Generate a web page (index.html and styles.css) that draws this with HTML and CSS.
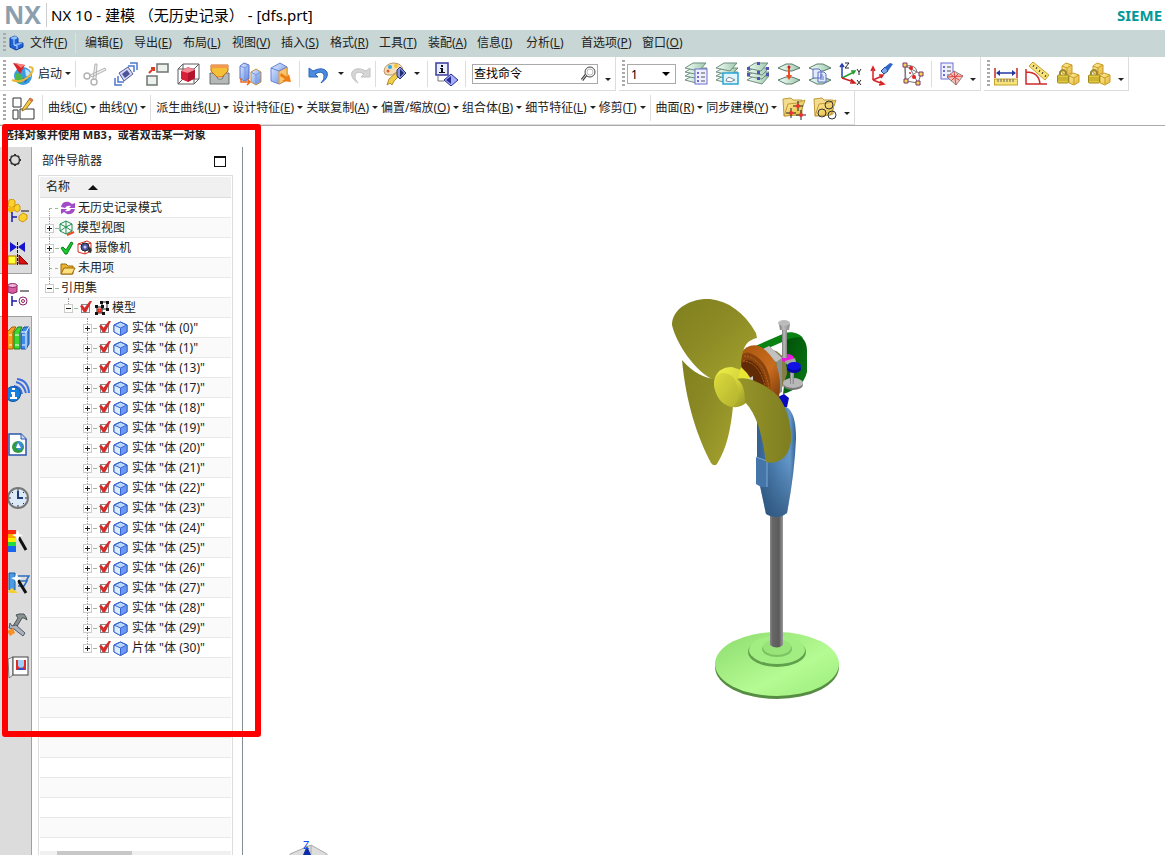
FILE: index.html
```html
<!DOCTYPE html>
<html lang="zh-CN">
  <head>
    <meta charset="UTF-8" />
    <meta name="viewport" content="width=device-width, initial-scale=1.0" />
    <title>NX 10 - 建模</title>
    <link rel="stylesheet" href="styles.css">
  </head>
  <body>
    <!-- shared icons and gradients -->
    <svg class="defs" width="0" height="0" aria-hidden="true">
      <defs>
        <linearGradient id="gold" x1="0" y1="0" x2="1" y2="1"><stop offset="0" stop-color="#fff0a0"/><stop offset="1" stop-color="#e3b53a"/></linearGradient>
        <linearGradient id="blue" x1="0" y1="0" x2="1" y2="1"><stop offset="0" stop-color="#e4f0ff"/><stop offset="1" stop-color="#5b86e8"/></linearGradient>
        <linearGradient id="sheet" x1="0" y1="0" x2="1" y2="0"><stop offset="0" stop-color="#f4fff8"/><stop offset="1" stop-color="#9cc8ac"/></linearGradient>
        <symbol id="cube" viewBox="0 0 15 15">
          <path d="M7.500 1L14 4V11L7.500 14.500L1 11V4Z" fill="#b9d6ff" stroke="#2457c5"/>
          <path d="M1 4L7.500 7L7.500 14.500L1 11Z" fill="#dcecff"/>
          <path d="M7.500 7L14 4V11L7.500 14.500Z" fill="#6c97f4"/>
          <path d="M1 4L7.500 7L14 4M7.500 7V14M7.500 1L14 4V11L7.500 14.500L1 11V4Z" fill="none" stroke="#3a68cf"/>
        </symbol>
        <symbol id="layers" viewBox="0 0 24 24">
          <g fill="url(#sheet)" stroke="#6f8f81">
            <path d="M1 18L8 14H23L16 22Z"/><path d="M1 14L8 10H23L16 17Z"/><path d="M1 10L8 6H23L16 13Z"/><path d="M1 6L9 1H22L15 9Z"/>
          </g>
        </symbol>
        <symbol id="two-sheets" viewBox="0 0 24 24">
          <g fill="url(#sheet)" stroke="#5b7b6d"><path d="M1 6L9 2H15L23 6L15 9H9Z"/><path d="M1 18L9 15H15L23 18L15 22H9Z"/></g>
        </symbol>
        <symbol id="lock-boxes" viewBox="0 0 24 24">
          <g fill="url(#gold)" stroke="#c99c26"><path d="M6 4L10 1L16 3V11L11 13L6 11Z"/><path d="M13 14L17 11L23 13V20L18 23L13 21Z"/><path d="M6 4L11 6L16 3M11 6V12M13 14L18 16L23 13M18 16V22" fill="none"/></g>
          <path d="M4 13V10Q7 6 10 10V13" fill="none" stroke="#9a8a35" stroke-width="2"/>
          <rect x="1.500" y="13" width="11" height="8" rx="1" fill="#e2c83c" stroke="#a08a20"/><path d="M2 16H12M2 18H12" stroke="#b59f28"/>
        </symbol>
        <symbol id="folder" viewBox="0 0 24 24"><path d="M1 3L9 2L11 4H20V18L2 20Z" fill="#f3dc8c" stroke="#c09a3c"/><path d="M2 20L6 8L15 7L23 4L18 19Z" fill="url(#gold)" stroke="#c09a3c"/></symbol>
      </defs>
    </svg>

    <header class="titlebar">
      <span class="logo">NX</span>
      <h1 class="title">NX 10 - 建模 （无历史记录） - [dfs.prt]</h1>
      <span class="brand">SIEME</span>
    </header>

    <nav class="menubar">
      <i class="grip"></i>
      <svg class="app-icon" viewBox="0 0 16 16"><path d="M2 3L7 1L10 3V8L15 8V12L8 15L2 12Z" fill="#1f62d8" stroke="#123f9e"/><path d="M2 3L7 1L10 3L6 5Z" fill="#8cc0ff"/><path d="M6 10L10 8L15 8L9 11Z" fill="#79b1ff"/><path d="M6 5V10L9 11V14" fill="none" stroke="#bcdcff"/></svg>
      <button class="menu first">文件(<u>F</u>)</button>
      <button class="menu">编辑(<u>E</u>)</button>
      <button class="menu">导出(<u>E</u>)</button>
      <button class="menu">布局(<u>L</u>)</button>
      <button class="menu">视图(<u>V</u>)</button>
      <button class="menu">插入(<u>S</u>)</button>
      <button class="menu">格式(<u>R</u>)</button>
      <button class="menu">工具(<u>T</u>)</button>
      <button class="menu">装配(<u>A</u>)</button>
      <button class="menu">信息(<u>I</u>)</button>
      <button class="menu">分析(<u>L</u>)</button>
      <button class="menu wide">首选项(<u>P</u>)</button>
      <button class="menu">窗口(<u>O</u>)</button>
    </nav>

    <div class="toolbar-row">
      <div class="toolbar">
        <i class="grip"></i>
        <button class="start">
          <svg class="icon" viewBox="0 0 24 24"><circle cx="12" cy="14" r="9" fill="#3b9be0"/><path d="M4 12Q9 10 11 14T9 22Q3 20 4 12Z" fill="#4db848"/><path d="M14 7Q20 9 20 15L15 14Z" fill="#bfe6ff"/><path d="M12 16L17 17L14 21Z" fill="#1c6cc0"/><path d="M2 1L14 3L9 12Z" fill="#d8232a"/><path d="M4 1L14 3L10 6Z" fill="#f58078"/><path d="M1 18Q11 22 19 13Q25 5 18 5" fill="none" stroke="#e9b63a" stroke-width="2"/></svg>
          启动<i class="arrow"></i>
        </button>
        <i class="sep"></i>
        <button class="tool" aria-label="剪切"><svg class="icon" viewBox="0 0 24 24"><g fill="none" stroke="#b4b4b4"><circle cx="4" cy="14" r="3" stroke-width="1.500"/><circle cx="11" cy="20" r="3" stroke-width="1.500"/><path d="M7 13L22 6L23 8L9 15ZM10 17L12 2L14 2L13 17Z" fill="#eee"/></g></svg></button>
        <button class="tool" aria-label="移动"><svg class="icon" viewBox="0 0 24 24"><path d="M5 11L14 5L19 12L10 19Z" fill="#d4d8f2" stroke="#535a9c"/><path d="M8 12L13 8L16 12L11 16Z" fill="#4b5598"/><path d="M16 1H23V8M14 4H20V10M1 16V23H8M4 14V20H10" fill="none" stroke="#4f78d0" stroke-width="1.500"/></svg></button>
        <button class="tool" aria-label="复制显示"><svg class="icon" viewBox="0 0 24 24"><path d="M12 2H23V10H12ZM2 14H12V23H2Z" fill="#edf1ee" stroke="#6d7572" stroke-width="1.500"/><path d="M4 11L9 6M6 6H9V9" fill="none" stroke="#dd3c20" stroke-width="2"/></svg></button>
        <button class="tool" aria-label="着色"><svg class="icon" viewBox="0 0 24 24"><path d="M2 7L7 2H23V17L18 22H2ZM2 7H18V22M18 7L23 2M7 2V17H23M2 22L7 17" fill="none" stroke="#5d5d5d"/><path d="M5 9L12 5L19 8V16L12 20L5 17Z" fill="#d8203a"/><path d="M5 9L12 5L19 8L12 11Z" fill="#f58a94"/><path d="M12 11L19 8V16L12 20Z" fill="#b3142c"/></svg></button>
        <button class="tool" aria-label="拔模"><svg class="icon" viewBox="0 0 24 24"><path d="M3 11H8L11 17H15L18 11H22V22H3Z" fill="#b5b9b7" stroke="#6b6f6d"/><path d="M4 3H21V9L15 15H10L4 9Z" fill="#f4c136" stroke="#c46a20"/><path d="M4 3H21V6H4Z" fill="#f49a4a"/></svg></button>
        <button class="tool" aria-label="拉伸"><svg class="icon" viewBox="0 0 24 24"><path d="M2 4L6 1L11 3V17L7 19L2 17Z" fill="url(#blue)" stroke="#5d73c4"/><path d="M13 10L18 7L23 10V20L18 23L13 20Z" fill="url(#blue)" stroke="#c7923d"/><path d="M18 13V22M13 10L18 13L23 10M2 4L7 6L11 3M7 6V18" stroke="#7c92dc" fill="none"/><path d="M3 16V20H12M9 17L12 20L9 23" fill="none" stroke="#ee6a19" stroke-width="1.500"/></svg></button>
        <button class="tool" aria-label="偏置"><svg class="icon" viewBox="0 0 24 24"><path d="M2 6L11 1L18 5V18L10 22L2 19Z" fill="url(#blue)" stroke="#6b83d4"/><path d="M10 9L18 5V18L10 22Z" fill="#fbc46c" stroke="#d99a37"/><path d="M2 6L10 9L18 5" fill="none" stroke="#6b83d4"/><path d="M12 11L18 15L20 12L22 20L13 19L16 17L11 14Z" fill="#f07c14"/></svg></button>
        <i class="sep"></i>
        <button class="tool" aria-label="撤销"><svg class="icon" viewBox="0 0 24 24"><path d="M2 6V15H11L8 12Q15 8 17 13Q18 17 14 21Q22 16 20 10Q16 4 6 9Z" fill="#4a8be0" stroke="#2e66bd"/></svg></button>
        <button class="drop" aria-label="撤销列表"><i class="arrow"></i></button>
        <button class="tool redo" aria-label="重做"><svg class="icon" viewBox="0 0 24 24"><path d="M22 6V15H13L16 12Q9 8 7 13Q6 17 10 21Q2 16 4 10Q8 4 18 9Z" fill="#d6d6d6" stroke="#c2c2c2"/></svg></button>
        <i class="sep"></i>
        <button class="tool" aria-label="编辑对象显示"><svg class="icon" viewBox="0 0 24 24"><path d="M1 9Q2 2 10 1Q19 1 20 8Q17 13 12 11Q10 14 5 13Q1 13 1 9Z" fill="#f4dfb4" stroke="#b8966a"/><circle cx="7" cy="5" r="2" fill="#2fa8e8"/><circle cx="13" cy="4" r="2" fill="#f2c22e"/><circle cx="5" cy="9" r="1.500" fill="#e8573a"/><path d="M4 23L6 17L14 10L17 13L11 19L9 23L7 21Z" fill="#f1cf4b" stroke="#b78e26"/><path d="M14 8L17 5L23 11L17 17L14 14Z" fill="#8d99e8" stroke="#2a357f"/><path d="M17 7L21 11L17 15Z" fill="#242c70"/></svg></button>
        <button class="drop" aria-label="显示选项"><i class="arrow"></i></button>
        <i class="sep"></i>
        <button class="tool" aria-label="对象信息"><svg class="icon" viewBox="0 0 24 24"><rect x="1" y="1" width="12" height="12" fill="#e8ecff" stroke="#3a3a9e" stroke-width="1.500"/><path d="M6 3H8V5H6ZM5 6H8V10H10V11H4V10H6V7H5Z" fill="#111"/><path d="M3 14V19H9" fill="none" stroke="#777"/><path d="M9 18L16 12L23 18L16 24Z" fill="#a4b0ff" stroke="#2b2b80"/><path d="M11 18L16 14V22Z" fill="#2b2b90"/></svg></button>
        <i class="sep"></i>
        <div class="search">
          <input type="text" value="查找命令" aria-label="查找命令">
          <svg viewBox="0 0 16 16"><circle cx="10" cy="6" r="5" fill="#fff" stroke="#444"/><circle cx="10" cy="6" r="3" fill="none" stroke="#bbb"/><path d="M6 9L2 14" stroke="#444" stroke-width="3"/><path d="M6 9L2 14" stroke="#ddd"/></svg>
        </div>
        <button class="drop low" aria-label="工具条选项"><i class="arrow"></i></button>
      </div>

      <div class="toolbar">
        <i class="grip"></i>
        <select class="layer" aria-label="工作图层"><option>1</option></select>
        <button class="tool" aria-label="图层设置"><svg class="icon" viewBox="0 0 24 24"><use href="#layers"/><rect x="11" y="7" width="12" height="15" fill="#eef0ff" stroke="#6d6cd4"/><path d="M13 10H15V12H13ZM13 14H15V16H13ZM13 18H15V20H13Z" fill="#6d6cd4"/><path d="M17 11H21M17 15H21M17 19H21" stroke="#555"/></svg></button>
        <button class="tool" aria-label="视图可见图层"><svg class="icon" viewBox="0 0 24 24"><use href="#layers"/><rect x="8" y="11" width="15" height="11" fill="#dff6ff" stroke="#2aa5d6" stroke-width="1.500"/><path d="M11 19Q12 14 16 16T20 18Q16 21 11 19Z" fill="#fff" stroke="#789"/></svg></button>
        <button class="tool" aria-label="图层类别"><svg class="icon" viewBox="0 0 24 24"><use href="#layers"/><path d="M11 0H14V3H11ZM1 5H4V8H1ZM11 9H14V12H11ZM20 5H23V8H20ZM1 11H4V14H1ZM20 11H23V14H20ZM11 15H14V18H11Z" fill="#5252b8"/></svg></button>
        <button class="tool" aria-label="移动至图层"><svg class="icon" viewBox="0 0 24 24"><use href="#two-sheets"/><path d="M12 5V15" stroke="#f04a20" stroke-width="2"/><path d="M9 13H15L12 18Z" fill="#f04a20"/><circle cx="12" cy="5" r="1.500" fill="#d51818"/></svg></button>
        <button class="tool" aria-label="复制至图层"><svg class="icon" viewBox="0 0 24 24"><use href="#two-sheets"/><path d="M5 7H11L13 9V16H5ZM10 10H16L18 12V20H10Z" fill="#e4ebff" stroke="#5b72c4"/><path d="M12 13H15M12 15H16M12 17H16" stroke="#5b72c4"/></svg></button>
        <button class="tool" aria-label="WCS"><svg class="icon" viewBox="0 0 24 24"><path d="M3 16V3M1 5L3 2L5 5" stroke="#2840b0" stroke-width="1.500" fill="none"/><path d="M3 16L15 10M12 9H16L14 12" stroke="#22a02c" stroke-width="1.500" fill="none"/><path d="M3 16L15 20M12 17L16 21L11 21" stroke="#c82020" stroke-width="1.500" fill="none"/><path d="M6 1H10L6 6H10M18 7L20 10L22 7M20 10V13M18 18L22 23M22 18L18 23" fill="none" stroke="#222"/></svg></button>
        <button class="tool" aria-label="显示 WCS"><svg class="icon" viewBox="0 0 24 24"><path d="M3 18V6M1 9L3 5L5 9M3 18L12 14M9 13H13L11 16M3 18L13 22M10 19L14 22L9 23" fill="none" stroke="#d82424" stroke-width="1.500"/><path d="M11 9L15 5L18 9L14 12Z" fill="#82a6ee" stroke="#244a9c"/><path d="M15 5L20 1L23 2L18 9Z" fill="#2d65c8"/></svg></button>
        <button class="tool" aria-label="点集"><svg class="icon" viewBox="0 0 24 24"><path d="M4 4L20 12L17 21L5 19ZM4 4Q15 2 16 10Q12 12 5 19M4 4V19M10 8L17 21" fill="none" stroke="#777"/><path d="M2 1H6V5H2ZM18 10H22V14H18ZM3 17H7V21H3ZM15 19H19V23H15Z" fill="#f7d94c" stroke="#7a3070"/><circle cx="10" cy="6" r="2" fill="#e32222"/><circle cx="13" cy="15" r="2" fill="#e32222"/><circle cx="9" cy="11" r="1" fill="#e32222"/></svg></button>
        <i class="sep"></i>
        <button class="tool" aria-label="显示列表"><svg class="icon" viewBox="0 0 24 24"><rect x="2" y="1" width="12" height="16" fill="#eef0ff" stroke="#6d6cd4"/><path d="M4 4H6V6H4ZM4 8H6V10H4ZM4 12H6V14H4Z" fill="#6d6cd4"/><path d="M8 5H12M8 9H12M8 13H11" stroke="#555"/><path d="M8 15L15 9L24 14L17 23Z" fill="#f7c0b8" stroke="#888"/><path d="M8 15L24 14M15 9L17 23M11 12L20 18M12 19L19 12" stroke="#d84a4a"/></svg></button>
        <button class="drop low" aria-label="工具条选项"><i class="arrow"></i></button>
      </div>

      <div class="toolbar">
        <i class="grip"></i>
        <button class="tool" aria-label="测量距离"><svg class="icon" viewBox="0 0 24 24"><path d="M1 6V16M23 6V16" stroke="#c62828" stroke-width="1.500"/><path d="M3 11H21" stroke="#2438a0" stroke-width="1.500"/><path d="M2 11L6 8V14ZM22 11L18 8V14Z" fill="#2438a0"/><rect x="0.500" y="17" width="23" height="6" fill="#f8e27a" stroke="#c6a22e"/><path d="M4 17V20M7 17V20M10 17V20M13 17V20M16 17V20M19 17V20" stroke="#666"/></svg></button>
        <button class="tool" aria-label="测量角度"><svg class="icon" viewBox="0 0 24 24"><path d="M1 7V22H22M1 10Q14 10 15 22" fill="none" stroke="#d02a2a" stroke-width="1.500"/><path d="M4 4L8 0L24 13L20 18Z" fill="#f8e27a" stroke="#c6a22e"/><path d="M9 3L8 5M12 5L11 7M15 8L14 10M18 10L17 12M21 13L20 15" stroke="#333"/></svg></button>
        <button class="tool" aria-label="装配约束"><svg class="icon" viewBox="0 0 24 24"><use href="#lock-boxes"/></svg></button>
        <button class="tool" aria-label="移动组件"><svg class="icon" viewBox="0 0 24 24"><use href="#lock-boxes"/></svg></button>
        <button class="drop low" aria-label="工具条选项"><i class="arrow"></i></button>
      </div>
    </div>

    <div class="toolbar-row second">
      <div class="toolbar">
        <i class="grip"></i>
        <button class="tool sketch" aria-label="草图"><svg class="icon" viewBox="0 0 24 24"><path d="M2 2H10V11H2ZM2 14H7V23H2ZM9 13H23V23H9Z" fill="#fff" stroke="#333"/><path d="M12 12L19 2L22 4L15 13L11 15Z" fill="#f5c944" stroke="#9b7425"/><path d="M19 2L22 4L21 6L18 4Z" fill="#e86a5a"/></svg></button>
        <i class="sep"></i>
        <button class="text-tool">曲线(<u>C</u>)<i class="arrow"></i></button>
        <button class="text-tool">曲线(<u>V</u>)<i class="arrow"></i></button>
        <i class="sep"></i>
        <button class="text-tool">派生曲线(<u>U</u>)<i class="arrow"></i></button>
        <button class="text-tool">设计特征(<u>E</u>)<i class="arrow"></i></button>
        <button class="text-tool">关联复制(<u>A</u>)<i class="arrow"></i></button>
        <button class="text-tool">偏置/缩放(<u>O</u>)<i class="arrow"></i></button>
        <button class="text-tool">组合体(<u>B</u>)<i class="arrow"></i></button>
        <button class="text-tool">细节特征(<u>L</u>)<i class="arrow"></i></button>
        <button class="text-tool">修剪(<u>T</u>)<i class="arrow"></i></button>
        <i class="sep"></i>
        <button class="text-tool">曲面(<u>R</u>)<i class="arrow"></i></button>
        <button class="text-tool">同步建模(<u>Y</u>)<i class="arrow"></i></button>
        <button class="tool" aria-label="点组"><svg class="icon" viewBox="0 0 24 24"><use href="#folder"/><path d="M16 5V15M11 10H21M9 12V22M4 17H14M19 14V24M14 19H24" stroke="#222"/><circle cx="16" cy="10" r="2" fill="#f03030"/><circle cx="9" cy="17" r="2" fill="#f03030"/><circle cx="19" cy="19" r="2" fill="#f03030"/></svg></button>
        <button class="tool" aria-label="曲线组"><svg class="icon" viewBox="0 0 24 24"><use href="#folder"/><g fill="none" stroke="#333"><circle cx="16" cy="9" r="4"/><circle cx="9" cy="17" r="4"/><circle cx="19" cy="19" r="4"/></g></svg></button>
        <button class="drop low" aria-label="工具条选项"><i class="arrow"></i></button>
      </div>
    </div>

    <p class="prompt">选择对象并使用 MB3，或者双击某一对象</p>

    <main class="workspace">
      <aside class="resource-bar">
        <button class="gear" aria-label="设置"><svg viewBox="0 0 24 24"><circle cx="9" cy="12" r="4.500" fill="none" stroke="#333" stroke-width="1.500"/><path d="M9 6V8M9 16V18M3 12H5M13 12H15M5 8L6 9M12 15L13 16M13 8L12 9M5 16L6 15" stroke="#333" stroke-width="2"/></svg></button>
        <button class="tab" aria-label="装配导航器"><svg viewBox="0 0 24 24"><path d="M3 1L7 0L9 2V7L5 9L2 7ZM8 7L12 5L14 7V11L11 13L8 11ZM13 17L17 14L21 16V20L17 23L13 21Z" fill="#fbd12c" stroke="#d19510"/><path d="M2 9L5 7L8 9V12L5 14L2 12Z" fill="#f3b90c"/><path d="M15 12H23" stroke="#111"/><path d="M6 13V23M6 18H11" stroke="#1a1aa8" stroke-width="1.500"/></svg></button>
        <button class="tab last" aria-label="约束导航器"><svg viewBox="0 0 24 24"><path d="M4 1L11 6L4 11ZM19 1L12 6L19 11Z" fill="#1515d0"/><path d="M11.500 1V24" stroke="#111" stroke-dasharray="3 1"/><rect x="2" y="15" width="8" height="8" fill="#ff3" stroke="#b07000"/><path d="M13 14V23H22Z" fill="#e01010" stroke="#700"/></svg></button>
        <button class="tab active" aria-label="部件导航器"><svg viewBox="0 0 24 24"><path d="M2 2V9Q6 12 11 9V2" fill="#d65ca0" stroke="#8c2066"/><ellipse cx="6.500" cy="2.500" rx="4.500" ry="2" fill="#f5b4d8" stroke="#8c2066"/><path d="M14 8H23" stroke="#111"/><path d="M6 13V23M6 18H11" stroke="#1a1aa8" stroke-width="1.500"/><circle cx="17" cy="18" r="4" fill="#fff" stroke="#8c2066"/><circle cx="17" cy="18" r="1.500" fill="none" stroke="#8c2066"/></svg></button>
        <button class="tab next" aria-label="重用库"><svg viewBox="0 0 24 24"><path d="M1 6L6 1H10L7 6V23H1Z" fill="#f6a020" stroke="#a85808"/><path d="M8 6L12 1H16L14 6V23H8Z" fill="#3fd830" stroke="#16801a"/><path d="M15 6L18 1H23V18L20 23H15Z" fill="#3f8be8" stroke="#1a4fa5"/><path d="M15 6H20V23M20 6L23 1M3 9H6M3 19H6M9 9H13M9 19H13M16 9H19M16 19H19" stroke="#fff" fill="none"/></svg></button>
        <button class="tab tall" aria-label="HD3D 工具"><svg viewBox="0 0 24 24"><path d="M8 8Q15 9 16 16M10 4Q18 6 20 15M11 1Q22 2 23 15" fill="none" stroke="#3d6edb" stroke-width="2"/><circle cx="7" cy="16" r="7.500" fill="#1680dc" stroke="#0b4f9e"/><path d="M6 10H9V12H6ZM5 14H9V19H11V21H4V19H6V16H5Z" fill="#fff"/></svg></button>
        <button class="tab tall" aria-label="Web 浏览器"><svg viewBox="0 0 24 24"><path d="M3 2H15L20 7V23H3Z" fill="#fff" stroke="#2c55ad" stroke-width="1.500"/><path d="M15 2V7H20" fill="#c8daff" stroke="#2c55ad"/><circle cx="12" cy="15" r="6" fill="#2f9a3f"/><path d="M12 9Q17 10 17 15L14 19L9 15Z" fill="#3b8ddd"/><path d="M12 11L15 16H10Z" fill="#fff"/></svg></button>
        <button class="tab tall" aria-label="历史记录"><svg viewBox="0 0 24 24"><circle cx="12" cy="12" r="10" fill="#dce9f7" stroke="#777" stroke-width="2"/><path d="M12 5V12H17" fill="none" stroke="#1c3f7c" stroke-width="2"/><path d="M12 3V5M12 19V21M3 12H5M19 12H21M6 6L7 7M17 17L18 18M18 6L17 7M6 18L7 17" stroke="#333"/></svg></button>
        <button class="tab" aria-label="系统材料"><svg viewBox="0 0 24 24"><path d="M1 1H10V5H1Z" fill="#ff2a10"/><path d="M1 5H10V9H1Z" fill="#ffa500"/><path d="M1 9H10V13H1Z" fill="#f5f000"/><path d="M1 13H10V17H1Z" fill="#25dc40"/><path d="M1 17H10V23H1Z" fill="#1767ee"/><path d="M12 7L20 21" stroke="#111" stroke-width="3"/><path d="M12 1L13 5L17 6L13 8L12 12L10 8L6 6L10 5Z" fill="#fff"/></svg></button>
        <button class="tab" aria-label="加工向导"><svg viewBox="0 0 24 24"><path d="M3 2H9V19H3Z" fill="#4a9be2" stroke="#1f5ca5"/><path d="M10 5H23L20 10H12M10 10H21L18 15H12" fill="none" stroke="#2c6cc0" stroke-width="1.500"/><path d="M2 20L6 17L12 22H3Z" fill="#f5cf33"/><path d="M12 9L20 22" stroke="#111" stroke-width="3"/><path d="M11 2L12 6L16 7L12 9L11 13L9 9L5 7L9 6Z" fill="#fff"/></svg></button>
        <button class="tab" aria-label="工具"><svg viewBox="0 0 24 24"><path d="M10 2L13 1H18L20 4L21 7L18 5H16L10 15L7 13L12 5Z" fill="#899193" stroke="#4b5153"/><path d="M4 10L6 13L10 12L19 20L17 23L8 16L3 15Z" fill="#abb4be" stroke="#515a66"/><path d="M1 18L7 15L9 20L4 23Z" fill="#f5902c"/></svg></button>
        <button class="tab" aria-label="角色"><svg viewBox="0 0 24 24"><path d="M2 4L7 2V20L3 23Z" fill="#eee" stroke="#777"/><rect x="7" y="2" width="15" height="18" fill="#fff" stroke="#444"/><rect x="10" y="5" width="10" height="10" fill="#e02a25"/><path d="M12 5H18V11L15 14L12 11Z" fill="#9cd0ff"/><path d="M11 15Q15 10 19 15Z" fill="#2850cc"/></svg></button>
      </aside>

      <section class="navigator">
        <div class="nav-head">
          <h2>部件导航器</h2>
          <button class="maximize" aria-label="最大化"></button>
        </div>
        <div class="tree">
          <div class="column-head">名称<i class="sort"></i></div>
          <ul class="rows" id="rows">
            <li class="row trunk start-trunk"><i class="stub"></i>
              <svg class="node" viewBox="0 0 16 16"><path d="M1 7Q2 1 9 2L12 4L15 3V8H9L11 6Q7 5 5 8Z" fill="#a24cc8"/><path d="M15 9Q14 15 7 14L4 12L1 14V9H7L5 11Q10 12 11 9Z" fill="#a24cc8"/></svg>无历史记录模式</li>
            <li class="row trunk"><i class="expander plus"></i>
              <svg class="node" viewBox="0 0 16 16"><path d="M1 4L7 1L13 4V11L7 14L1 11ZM1 4L7 7L13 4M7 1V14M1 11L7 7L13 11" fill="none" stroke="#1a9050"/><path d="M8 15L15 12" stroke="#e84c20" stroke-width="2"/></svg>模型视图</li>
            <li class="row trunk"><i class="expander plus"></i>
              <svg class="node" viewBox="0 0 16 16"><path d="M2 8L4 7L7 10L12 2L14 3L8 14H6Z" fill="#18c82c" stroke="#078518"/></svg>
              <svg class="node camera" viewBox="0 0 16 16"><path d="M1 4L10 1L14 3V11L8 14L1 12Z" fill="#fff" stroke="#d83020"/><path d="M1 4L8 5L14 3M8 5V14" stroke="#d83020" fill="none"/><circle cx="8" cy="7" r="4" fill="#4a55a8" stroke="#222"/><circle cx="8" cy="7" r="1.500" fill="#cce"/><path d="M12 7Q16 8 14 13L11 12Z" fill="#333"/></svg>摄像机</li>
            <li class="row trunk"><i class="stub"></i>
              <svg class="node" viewBox="0 0 16 16"><path d="M1 4H6L8 6H13V14H1Z" fill="#e9b431" stroke="#9d6c0b"/><path d="M1 14L4 8H15L12 14Z" fill="#ffe080" stroke="#9d6c0b"/></svg>未用项</li>
            <li class="row trunk end-trunk"><i class="expander"></i>引用集</li>
            <li class="row level-2 end-trunk"><i class="expander"></i><input type="checkbox" checked aria-label="模型">
              <svg class="node" viewBox="0 0 16 16"><path d="M3 7H8V13H3ZM8 2H13V9H8Z" fill="#fff" stroke="#222"/><path d="M1 5H4V8H1ZM7 5H10V8H7ZM1 12H4V15H1ZM8 12H11V15H8ZM6 1H9V4H6ZM12 1H15V4H12ZM12 8H15V11H12Z" fill="#111"/><rect x="4" y="9" width="3" height="3" fill="#f57030" stroke="#d00"/></svg>模型</li>
          </ul>
          <div class="hscroll"><i></i></div>
        </div>
      </section>

      <section class="canvas">
        <svg viewBox="243 147 922 708" preserveAspectRatio="xMinYMin meet" role="img" aria-label="电风扇模型">
          <defs>
            <linearGradient id="blade" x1="0" y1="0" x2="1" y2="1"><stop offset="0" stop-color="#80801f"/><stop offset="0.400" stop-color="#8a8924"/><stop offset="1" stop-color="#a5a32e"/></linearGradient>
            <linearGradient id="blade-dark" x1="0" y1="0" x2="1" y2="0"><stop offset="0" stop-color="#96942a"/><stop offset="1" stop-color="#7f7e20"/></linearGradient>
            <linearGradient id="hub" x1="0" y1="0" x2="1" y2="1"><stop offset="0" stop-color="#f2f24a"/><stop offset="0.500" stop-color="#d6d53c"/><stop offset="1" stop-color="#8f8e22"/></linearGradient>
            <linearGradient id="hub-face" x1="0" y1="0" x2="1" y2="1"><stop offset="0" stop-color="#dcdb3e"/><stop offset="1" stop-color="#b3b22e"/></linearGradient>
            <linearGradient id="neck" x1="0" y1="0" x2="1" y2="0"><stop offset="0" stop-color="#335f8d"/><stop offset="0.500" stop-color="#4f82b5"/><stop offset="0.850" stop-color="#6396c9"/><stop offset="1" stop-color="#335f8d"/></linearGradient>
            <linearGradient id="neck-shade" x1="0" y1="0" x2="0" y2="1"><stop offset="0.500" stop-color="#234568" stop-opacity="0"/><stop offset="1" stop-color="#234568" stop-opacity="0.600"/></linearGradient>
            <linearGradient id="pole" x1="0" y1="0" x2="1" y2="0"><stop offset="0" stop-color="#8a8a8a"/><stop offset="0.200" stop-color="#666"/><stop offset="0.700" stop-color="#5c5c5c"/><stop offset="0.900" stop-color="#868686"/><stop offset="1" stop-color="#999"/></linearGradient>
            <linearGradient id="base" x1="0" y1="0" x2="1" y2="1"><stop offset="0" stop-color="#8ddb6d"/><stop offset="0.600" stop-color="#b4fb93"/><stop offset="1" stop-color="#9cec7b"/></linearGradient>
            <linearGradient id="metal" x1="0" y1="0" x2="1" y2="0"><stop offset="0" stop-color="#777"/><stop offset="0.400" stop-color="#bbb"/><stop offset="1" stop-color="#888"/></linearGradient>
            <linearGradient id="motor" x1="0" y1="0" x2="1" y2="1"><stop offset="0" stop-color="#a9560f"/><stop offset="0.600" stop-color="#c96c1e"/><stop offset="1" stop-color="#7c3d0b"/></linearGradient>
            <linearGradient id="shell" x1="0" y1="0" x2="1" y2="1"><stop offset="0" stop-color="#004c06"/><stop offset="1" stop-color="#0a7a16"/></linearGradient>
          </defs>

          <!-- base and pole -->
          <ellipse cx="777" cy="667" rx="62" ry="32" fill="#558e42"/>
          <ellipse cx="777" cy="664" rx="62" ry="32" fill="url(#base)"/>
          <ellipse cx="777" cy="652" rx="29" ry="15" fill="#60a04a"/>
          <ellipse cx="777" cy="650" rx="28" ry="14" fill="#a3ee83"/>
          <ellipse cx="777" cy="649" rx="15" ry="8" fill="#7cc262"/>
          <ellipse cx="777" cy="647" rx="14" ry="8" fill="#99e478"/>
          <path d="M770 515H783V645Q777 650 770 645Z" fill="url(#pole)"/>

          <!-- neck -->
          <path d="M757 418L770 408L784 406C794 409 796 424 796 439C795 462 792 487 787 513Q777 521 766 514L760 486L757 460Z" fill="url(#neck)"/>
          <path d="M757 418L770 408L784 406C794 409 796 424 796 439C795 462 792 487 787 513Q777 521 766 514L760 486L757 460Z" fill="url(#neck-shade)"/>
          <path d="M756 457L767 461V487H761L756 484Z" fill="#4576a9"/>
          <path d="M756 457L767 461V487" fill="none" stroke="#7fa9d6"/>

          <!-- rear shell and shafts -->
          <path d="M785 334C798 331 807 339 807 350V372C804 384 796 390 783 394L784 386L787 341Z" fill="url(#shell)"/>
          <path d="M753 347L785 333C793 331 800 334 803 338Q796 336 789 339L764 350Z" fill="#078213"/>
          <path d="M768 349Q787 351 787 374L782 388L776 394Z" fill="#847e44"/>
          <ellipse cx="787" cy="358" rx="7" ry="4" fill="#ec18df"/>
          <path d="M782 328H787V358H782Z" fill="url(#metal)"/>
          <path d="M779 324L780 330H789L790 324Z" fill="url(#metal)"/>
          <ellipse cx="784" cy="323" rx="6" ry="3" fill="#bbb"/>
          <path d="M785 361L795 358L796 362L787 365Z" fill="#a5a5a5"/>
          <ellipse cx="793" cy="385" rx="10" ry="5" fill="#777"/>
          <ellipse cx="793" cy="383" rx="10" ry="5" fill="#b8b8b8"/>
          <path d="M790 369H794V384H790Z" fill="url(#metal)"/>
          <ellipse cx="794" cy="369" rx="7" ry="4" fill="#0707a5"/>
          <ellipse cx="794" cy="366" rx="7" ry="4" fill="#1111e5"/>
          <path d="M763 349L769 346L782 358V392L776 395L777 363Z" fill="#8f8f8f"/>
          <path d="M763 349L769 346L782 358L776 362Z" fill="#c1c1c1"/>
          <path d="M778 397L784 394L789 398L787 407H780Z" fill="#0a0abf"/>

          <!-- motor -->
          <path d="M741 353Q748 343 759 346C775 354 783 374 779 397L765 394L741 368Z" fill="url(#motor)"/>
          <path d="M741 355Q747 350 754 355C767 362 772 378 770 392L760 388L741 372Z" fill="#8a430c"/>
          <path d="M742 363Q748 357 754 363Q764 370 766 388L752 380L742 372Z" fill="#602b05"/>
          <path d="M744 356Q764 358 769 388M743 361Q759 362 765 386" fill="none" stroke="#b8641f" stroke-dasharray="2 1"/>

          <!-- blades and hub -->
          <path d="M672 325C672 309 690 298 710 299C728 301 744 312 756 333L757 338C745 341 743 348 741 363V372L714 380C695 372 676 343 672 325Z" fill="url(#blade)"/>
          <path d="M682 360C693 373 705 378 715 379L733 406C731 428 727 448 717 464Q714 467 711 463C697 436 686 403 682 360Z" fill="url(#blade)"/>
          <path d="M714 383C715 371 723 367 732 367L741 370L748 378L747 402Q741 408 733 407C722 405 715 395 714 383Z" fill="url(#hub)"/>
          <path d="M714 384C715 372 724 370 733 377Q740 386 738 399Q736 405 731 407Q716 403 714 384Z" fill="url(#hub-face)"/>
          <path d="M741 367L747 373L751 379H746L738 378Z" fill="#e7e632"/>
          <path d="M748 379L753 376V381Z" fill="#ccc"/>
          <path d="M737 379C749 375 769 387 778 396C787 407 792 426 791 441C789 458 778 465 766 462C763 444 760 418 745 402C745 389 742 382 737 379Z" fill="url(#blade-dark)"/>

          <!-- view triad -->
          <path d="M290 854L311 845L327 854V870H290Z" fill="#ddd" stroke="#aaa"/>
          <path d="M311 845V860" stroke="#aaa"/>
          <path d="M307 846L311 855H303Z" fill="#0a2aa8"/>
          <text x="303" y="849" class="axis">Z</text>
        </svg>
      </section>
    </main>

    <div class="highlight"></div>

    <script>
      const bodies = [0, 1, 13, 17, 18, 19, 20, 21, 22, 23, 24, 25, 26, 27, 28, 29, 30];
      const rows = document.getElementById("rows");

      bodies.forEach((n, i) => {
        const last = i === bodies.length - 1;
        const name = (last ? "片体" : "实体") + ' "体 (' + n + ')"';
        const row = document.createElement("li");
        row.className = "row level-3 trunk" + (last ? " end-trunk" : "");
        row.innerHTML =
          '<i class="expander plus"></i>' +
          '<input type="checkbox" id="body' + n + '" checked>' +
          '<svg class="node"><use href="#cube"/></svg>' +
          '<label for="body' + n + '">' + name + "</label>";
        rows.appendChild(row);
      });
    </script>
  </body>
</html>
```

FILE: styles.css
```css
* {
  box-sizing: border-box;
}

body {
  margin: 0;
  height: 100vh;
  display: flex;
  flex-direction: column;
  overflow: hidden;
  font-family: "Noto Sans", "Noto Sans CJK SC", sans-serif;
  font-size: 12px;
  line-height: 20px;
  color: #222;
  background: #fff;
}

h1,
h2,
p,
ul {
  margin: 0;
  padding: 0;
  font-size: inherit;
  font-weight: normal;
}

button {
  margin: 0;
  padding: 0;
  border: 0;
  background: none;
  font: inherit;
  color: inherit;
  white-space: nowrap;
  flex: none;
}

svg {
  display: block;
  flex: none;
}

.defs {
  position: absolute;
}

/* title */
.titlebar {
  flex: none;
  display: flex;
  align-items: center;
  height: 30px;
  padding-left: 4px;
}

.logo {
  width: 43px;
  height: 24px;
  border-right: 1px solid #ccc;
  font: bold 25px/22px "Open Sans", sans-serif;
  color: #8c9fae;
}

.title {
  margin-left: 4px;
  font-size: 15px;
  color: #000;
}

.brand {
  width: 48px;
  margin-left: auto;
  font: bold 15px/20px "Noto Sans", sans-serif;
  color: #099;
  overflow: hidden;
}

/* menus */
.menubar {
  flex: none;
  display: flex;
  align-items: center;
  height: 27px;
  padding: 0 0 2px 3px;
  background: #c8d7d6;
}

.grip {
  flex: none;
  width: 3px;
  height: 20px;
  background: repeating-linear-gradient(#aaa 0 2px, transparent 2px 4px);
}

.app-icon {
  width: 16px;
  height: 16px;
  margin: 0 6px 0 2px;
}

.menu {
  width: 49px;
  text-align: left;
}

.menu.first {
  width: 46px;
  margin-right: 9px;
  border-right: 1px solid #d8e3e2;
}

.menu.wide {
  width: 61px;
  margin-left: 6px;
}

/* toolbars */
.toolbar-row {
  flex: none;
  display: flex;
  gap: 3px;
  height: 34px;
}

.toolbar-row.second {
  height: 35px;
  border-bottom: 1px solid #aaa;
}

.toolbar {
  display: flex;
  align-items: center;
  padding-left: 3px;
  border-right: 1px solid #ddd;
  border-bottom: 1px solid #ddd;
}

.toolbar .grip {
  height: 27px;
}

.icon {
  width: 24px;
  height: 24px;
}

.sep {
  flex: none;
  width: 1px;
  height: 26px;
  margin: 0 3px;
  background: #ddd;
}

.tool {
  display: flex;
  justify-content: center;
  width: 31px;
}

.redo {
  width: 24px;
}

.sketch {
  width: 33px;
}

.start {
  display: flex;
  align-items: center;
  gap: 3px;
  padding: 0 1px 0 5px;
}

.arrow {
  display: inline-block;
  flex: none;
  border: 3px solid transparent;
  border-top-color: #222;
  border-bottom-width: 0;
}

.drop {
  display: flex;
  justify-content: center;
  width: 14px;
}

.drop.low {
  padding-top: 12px;
}

.text-tool {
  display: flex;
  align-items: center;
  padding: 0 1px 0 2px;
}

.text-tool .arrow {
  margin-left: 3px;
}

.search {
  display: flex;
  align-items: center;
  width: 126px;
  height: 20px;
  margin: 0 3px;
  border: 1px solid #aaa;
}

.search input {
  flex: 1;
  min-width: 0;
  height: 18px;
  padding: 0 1px;
  border: 0;
  font: inherit;
  color: #000;
}

.search svg {
  width: 16px;
  height: 16px;
  margin-right: 1px;
}

.layer {
  appearance: none;
  width: 49px;
  height: 20px;
  margin: 0 4px 0 2px;
  padding: 0 3px;
  border: 1px solid #aaa;
  border-radius: 0;
  font: inherit;
  color: #000;
  background: url("data:image/svg+xml,%3Csvg xmlns='http://www.w3.org/2000/svg' viewBox='0 0 8 4'%3E%3Cpath d='M0 0H8L4 4Z'/%3E%3C/svg%3E") right 5px center / 8px 4px no-repeat #fff;
}

.prompt {
  flex: none;
  height: 21px;
  padding-left: 3px;
  font-size: 11px;
  font-weight: bold;
  line-height: 18px;
}

/* left side */
.workspace {
  flex: 1;
  min-height: 0;
  display: flex;
}

.resource-bar {
  flex: none;
  display: flex;
  flex-direction: column;
  width: 32px;
  background: #dcdcdc;
}

.resource-bar button {
  display: flex;
  align-items: flex-start;
  height: 42px;
  padding: 9px 0 0 6px;
  border-right: 1px solid #a0a0a0;
}

.resource-bar svg {
  width: 24px;
  height: 24px;
}

.resource-bar .gear {
  height: 43px;
  padding-top: 1px;
}

.resource-bar .last {
  border-bottom: 1px solid #a0a0a0;
}

.resource-bar .active {
  background: #fff;
  border-right-color: #fff;
}

.resource-bar .next {
  border-top: 1px solid #a0a0a0;
}

.resource-bar .tall {
  height: 54px;
  padding-top: 20px;
}

.resource-bar::after {
  content: "";
  flex: 1;
  border-right: 1px solid #a0a0a0;
}

.navigator {
  flex: none;
  display: flex;
  flex-direction: column;
  width: 211px;
  padding: 0 9px 0 6px;
  border-right: 1px solid #858d95;
}

.nav-head {
  flex: none;
  display: flex;
  align-items: center;
  justify-content: space-between;
  height: 28px;
  padding: 0 7px 0 4px;
}

.maximize {
  width: 12px;
  height: 11px;
  border: 1px solid #111;
  border-top-width: 2px;
}

.tree {
  flex: 1;
  min-height: 0;
  display: flex;
  flex-direction: column;
  padding: 0 1px;
  border: 1px solid #ddd;
  border-bottom: 0;
}

.column-head {
  flex: none;
  display: flex;
  align-items: center;
  gap: 18px;
  height: 22px;
  padding-left: 6px;
  border-top: 1px solid #fff;
  border-bottom: 1px solid #ddd;
  background: #f0f0f0;
}

.sort {
  border: 5px solid transparent;
  border-top-width: 0;
  border-bottom-color: #111;
}

.rows {
  flex: 1;
  min-height: 0;
  overflow: hidden;
  list-style: none;
  background: repeating-linear-gradient(#fff 0 19px, #e8e8e8 19px 20px, #fafafa 20px 39px, #e8e8e8 39px 40px);
}

.row {
  position: relative;
  display: flex;
  align-items: center;
  height: 20px;
  padding-left: 5px;
}

.level-2 {
  padding-left: 24px;
}

.level-3 {
  padding-left: 43px;
}

.expander,
.stub {
  position: relative;
  flex: none;
  width: 9px;
  height: 9px;
  margin-right: 7px;
}

.expander {
  border: 1px solid #ccc;
  background: linear-gradient(#222, #222) center / 5px 1px no-repeat #fff;
}

.expander.plus {
  background:
    linear-gradient(#222, #222) center / 5px 1px no-repeat,
    linear-gradient(#222, #222) center / 1px 5px no-repeat,
    #fff;
}

/* dotted lines of the tree */
.expander::after,
.stub::after {
  content: "";
  position: absolute;
  left: 9px;
  top: 3px;
  width: 4px;
  border-top: 1px dashed #9b9;
}

.stub::after {
  left: 4px;
  top: 4px;
  width: 9px;
}

.row::before {
  content: "";
  position: absolute;
  left: 9px;
  top: 0;
  bottom: 0;
}

.level-2::before {
  left: 28px;
}

.level-3::before {
  left: 47px;
}

.trunk::before,
.end-trunk::before {
  border-left: 1px dotted #999;
}

.start-trunk::before {
  top: 10px;
}

.end-trunk::before {
  bottom: 10px;
}

.node {
  width: 16px;
  height: 16px;
  margin-right: 2px;
}

.stub + .node,
.expander + .node {
  margin: 0 2px 0 -2px;
}

.stub + .node {
  margin: 0 2px 0 -1px;
}

.row input {
  appearance: none;
  position: relative;
  flex: none;
  width: 9px;
  height: 9px;
  margin: 0 4px 0 1px;
  border: 1px solid #888;
  background: #fff;
}

.row input:checked::after {
  content: "";
  position: absolute;
  left: -2px;
  top: -4px;
  width: 12px;
  height: 12px;
  background: #d52b2b;
  clip-path: polygon(0 45%, 20% 38%, 38% 60%, 85% 0, 100% 5%, 50% 100%, 30% 95%);
}

.level-3 .node {
  width: 15px;
  height: 15px;
  margin-right: 4px;
}

.hscroll {
  flex: none;
  height: 4px;
  background: #f0f0f0;
}

.hscroll i {
  display: block;
  width: 75px;
  height: 4px;
  margin-left: 17px;
  background: #c8c8c8;
}

/* model view */
.canvas {
  flex: 1;
  min-width: 0;
  overflow: hidden;
}

.canvas svg {
  width: 100%;
  height: 100%;
}

.axis {
  font: 11px "Noto Sans", sans-serif;
  fill: #1450f0;
}

.highlight {
  position: absolute;
  left: 2px;
  top: 124px;
  width: 259px;
  height: 613px;
  border: 6px solid #f00;
  border-radius: 3px;
  pointer-events: none;
}
```
